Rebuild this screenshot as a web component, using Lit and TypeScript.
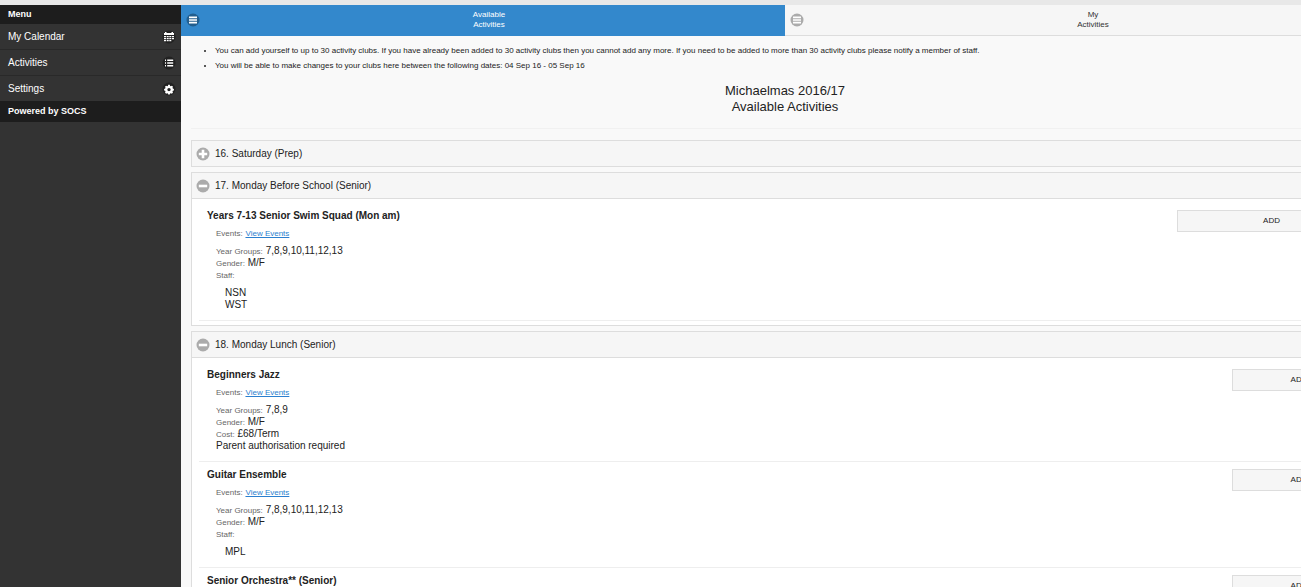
// import stuff
import { LitElement, html, css, svg, nothing } from 'lit';
import { customElement, property, state } from 'lit/decorators.js';
import { classMap } from 'lit/directives/class-map.js';

interface Activity {
  name: string;
  years: string;
  gender: string;
  cost?: string;
  note?: string;
  staff?: string[];
}

interface Group {
  title: string;
  open: boolean;
  wide?: boolean;
  activities: Activity[];
}

// white glyphs, drawn on a 14 x 14 disc
const glyphs = {
  bars: svg`<path d="M3 3.600h8v1.600H3zM3 6.200h8v1.600H3zM3 8.800h8v1.600H3z" />`,
  calendar: svg`<path d="M3 2h1.500v1h5V2H11v1h1v2H2V3h1zM2 6h2v1.300H2zM4.700 6h2v1.300h-2zM7.300 6h2v1.300h-2zM10 6h2v1.300h-2zM2 8h2v1.300H2zM4.700 8h2v1.300h-2zM7.300 8h2v1.300h-2zM10 8h2v1.300h-2zM2 10h2v1.300H2zM4.700 10h2v1.300h-2zM7.300 10h2v1.300h-2z" />`,
  bullets: svg`<path d="M3 3.600h1V5H3zM5.200 3.600h6V5h-6zM3 6.300h1v1.400H3zM5.200 6.300h6v1.400h-6zM3 9h1v1.400H3zM5.200 9h6v1.400h-6z" />`,
  gear: svg`<path fill-rule="evenodd" d="M6.200 2.800h1.600l.3 1.100.8.300 1-.5L11 4.800l-.5 1 .3.800 1.100.3v1.600l-1.100.3-.3.800.5 1-1.100 1.100-1-.5-.8.300-.3 1.100H6.200l-.3-1.100-.8-.3-1 .5L3 10.600l.5-1-.3-.8-1.100-.3V6.900l1.100-.3.300-.8-.5-1L4.100 3.700l1 .5.800-.3zM7 5.900a1.700 1.700 0 1 0 0 3.400 1.700 1.700 0 0 0 0-3.400z" />`,
  plus: svg`<path d="M5.700 2.800h2.600v2.900h2.900v2.600H8.300v2.900H5.700V8.300H2.800V5.700h2.900z" />`,
  minus: svg`<path d="M2.800 5.700h8.400v2.600H2.800z" />`,
};

@customElement('disc-icon')
export class DiscIcon extends LitElement {
  @property() name: keyof typeof glyphs = 'bars';

  static styles = css`
    :host {
      display: block;
      width: 14px;
      height: 14px;
      flex: none;
    }
    svg {
      display: block;
    }
    circle {
      fill: var(--disc, #ababab);
    }
    path {
      fill: #fff;
    }
  `;

  render() {
    return html`
      <svg width="14" height="14" viewBox="0 0 14 14" aria-hidden="true">
        <circle cx="7" cy="7" r="6.5"></circle>
        ${glyphs[this.name]}
      </svg>
    `;
  }
}

@customElement('activity-item')
export class ActivityItem extends LitElement {
  @property({ attribute: false }) activity!: Activity;
  @property({ type: Boolean }) wide = false;

  static styles = css`
    :host {
      display: flex;
      justify-content: space-between;
      align-items: flex-start;
      margin: 0 7px;
      padding: 7px 5px 9px 8px;
      border-bottom: 1px solid #eee;
      font-size: 10px;
      line-height: 12px;
    }
    h3 {
      margin: 0 0 5px;
      font-size: 10px;
    }
    p,
    ul {
      margin: 0;
      padding: 0 9px;
    }
    .events {
      margin-bottom: 6px;
    }
    .label,
    a {
      font-size: 8px;
      line-height: 8px;
    }
    .label {
      color: #666;
    }
    a {
      color: #2a7fcf;
    }
    ul {
      margin-top: 6px;
      padding-left: 18px;
      list-style: none;
    }
    button {
      width: 134px;
      height: 22px;
      padding: 0;
      border: 1px solid #ddd;
      background: #f6f6f6;
      color: #222;
      font: inherit;
      font-size: 8px;
    }
    button.wide {
      width: 189px;
    }
  `;

  render() {
    const a = this.activity;
    return html`
      <div>
        <h3>${a.name}</h3>
        <p class="events"><span class="label">Events:</span> <a href="#events">View Events</a></p>
        <p><span class="label">Year Groups:</span> ${a.years}</p>
        <p><span class="label">Gender:</span> ${a.gender}</p>
        ${a.cost ? html`<p><span class="label">Cost:</span> ${a.cost}</p>` : nothing}
        ${a.note ? html`<p>${a.note}</p>` : nothing}
        ${a.staff
          ? html`
              <p><span class="label">Staff:</span></p>
              <ul>
                ${a.staff.map((s) => html`<li>${s}</li>`)}
              </ul>
            `
          : nothing}
      </div>
      <button class=${classMap({ wide: this.wide })}>ADD</button>
    `;
  }
}

@customElement('app-root')
export class AppRoot extends LitElement {
  @state() groups: Group[] = [
    { title: '16. Saturday (Prep)', open: false, activities: [] },
    {
      title: '17. Monday Before School (Senior)',
      open: true,
      wide: true,
      activities: [
        {
          name: 'Years 7-13 Senior Swim Squad (Mon am)',
          years: '7,8,9,10,11,12,13',
          gender: 'M/F',
          staff: ['NSN', 'WST'],
        },
      ],
    },
    {
      title: '18. Monday Lunch (Senior)',
      open: true,
      activities: [
        {
          name: 'Beginners Jazz',
          years: '7,8,9',
          gender: 'M/F',
          cost: '£68/Term',
          note: 'Parent authorisation required',
        },
        { name: 'Guitar Ensemble', years: '7,8,9,10,11,12,13', gender: 'M/F', staff: ['MPL'] },
        { name: 'Senior Orchestra** (Senior)', years: '7,8,9,10,11,12,13', gender: 'M/F' },
      ],
    },
  ];

  static styles = css`
    :host {
      display: flex;
      flex-direction: column;
      height: 100vh;
      overflow: hidden;
      background: #f9f9f9;
      color: #222;
      font-family: 'Liberation Sans', Arial, sans-serif;
      font-size: 8px;
    }
    .strip {
      flex: none;
      height: 5px;
      background: #e8e8e8;
    }
    .shell {
      display: flex;
      flex: 1;
      min-height: 0;
    }

    /* side panel */
    nav {
      flex: none;
      width: 181px;
      background: #333;
      color: #fff;
    }
    nav h2 {
      margin: 0;
      padding: 0 8px;
      background: #1d1d1d;
      font-size: 9px;
      line-height: 19px;
    }
    nav h2.powered {
      line-height: 21px;
    }
    nav a {
      display: flex;
      justify-content: space-between;
      align-items: center;
      height: 25px;
      padding: 0 5px 0 8px;
      border-bottom: 1px solid #292929;
      color: #fff;
      font-size: 10px;
      text-decoration: none;
      --disc: #222;
    }
    nav a.last {
      border-bottom: 0;
    }

    /* the page keeps its width when the panel pushes it to the right */
    main {
      flex: none;
      width: calc(100% - 93px);
    }
    .tabs {
      display: grid;
      grid-template-columns: 1fr 1fr;
    }
    .tabs button {
      display: flex;
      align-items: center;
      height: 31px;
      padding: 0 7px 0 5px;
      border: 0;
      border-bottom: 1px solid #ddd;
      background: #f6f6f6;
      color: #333;
      font: inherit;
      line-height: 10px;
    }
    .tabs button.active {
      border-color: #3388cc;
      background: #3388cc;
      color: #fff;
      --disc: #225e8e;
    }
    .tabs span {
      flex: 1;
    }
    .rules {
      margin: 0;
      padding: 7px 0 0 34px;
      line-height: 15px;
    }
    header {
      margin: 0 10px 11px;
      padding: 10px 0 13px;
      border-bottom: 1px solid #f1f1f1;
      text-align: center;
    }
    h1 {
      margin: 0;
      font-size: 13px;
      font-weight: normal;
      line-height: 16px;
    }
    .group {
      margin: 0 10px 5px;
      border: 1px solid #ddd;
      background: #fff;
    }
    .group h2 {
      margin: 0;
    }
    .group h2 button {
      display: flex;
      align-items: center;
      gap: 5px;
      width: 100%;
      height: 25px;
      padding: 0 4px;
      border: 0;
      background: #f6f6f6;
      color: #222;
      font: inherit;
      font-size: 10px;
      font-weight: normal;
    }
    .body {
      padding: 4px 0;
      border-top: 1px solid #ddd;
    }
  `;

  toggle(group: Group) {
    this.groups = this.groups.map((g) => (g === group ? { ...g, open: !g.open } : g));
  }

  renderGroup(group: Group) {
    return html`
      <section class="group">
        <h2>
          <button aria-expanded=${group.open} @click=${() => this.toggle(group)}>
            <disc-icon name=${group.open ? 'minus' : 'plus'}></disc-icon>
            ${group.title}
          </button>
        </h2>
        ${group.open
          ? html`
              <div class="body">
                ${group.activities.map(
                  (a) => html`<activity-item .activity=${a} ?wide=${group.wide}></activity-item>`
                )}
              </div>
            `
          : nothing}
      </section>
    `;
  }

  render() {
    return html`
      <div class="strip"></div>
      <div class="shell">
        <nav>
          <h2>Menu</h2>
          <a href="#calendar">My Calendar <disc-icon name="calendar"></disc-icon></a>
          <a href="#activities">Activities <disc-icon name="bullets"></disc-icon></a>
          <a class="last" href="#settings">Settings <disc-icon name="gear"></disc-icon></a>
          <h2 class="powered">Powered by SOCS</h2>
        </nav>
        <main>
          <div class="tabs">
            <button class="active">
              <disc-icon name="bars"></disc-icon><span>Available<br />Activities</span>
            </button>
            <button>
              <disc-icon name="bars"></disc-icon><span>My<br />Activities</span>
            </button>
          </div>
          <ul class="rules">
            <li>
              You can add yourself to up to 30 activity clubs. If you have already been added to 30
              activity clubs then you cannot add any more. If you need to be added to more than 30
              activity clubs please notify a member of staff.
            </li>
            <li>
              You will be able to make changes to your clubs here between the following dates: 04
              Sep 16 - 05 Sep 16
            </li>
          </ul>
          <header>
            <h1>Michaelmas 2016/17<br />Available Activities</h1>
          </header>
          ${this.groups.map((g) => this.renderGroup(g))}
        </main>
      </div>
    `;
  }
}
